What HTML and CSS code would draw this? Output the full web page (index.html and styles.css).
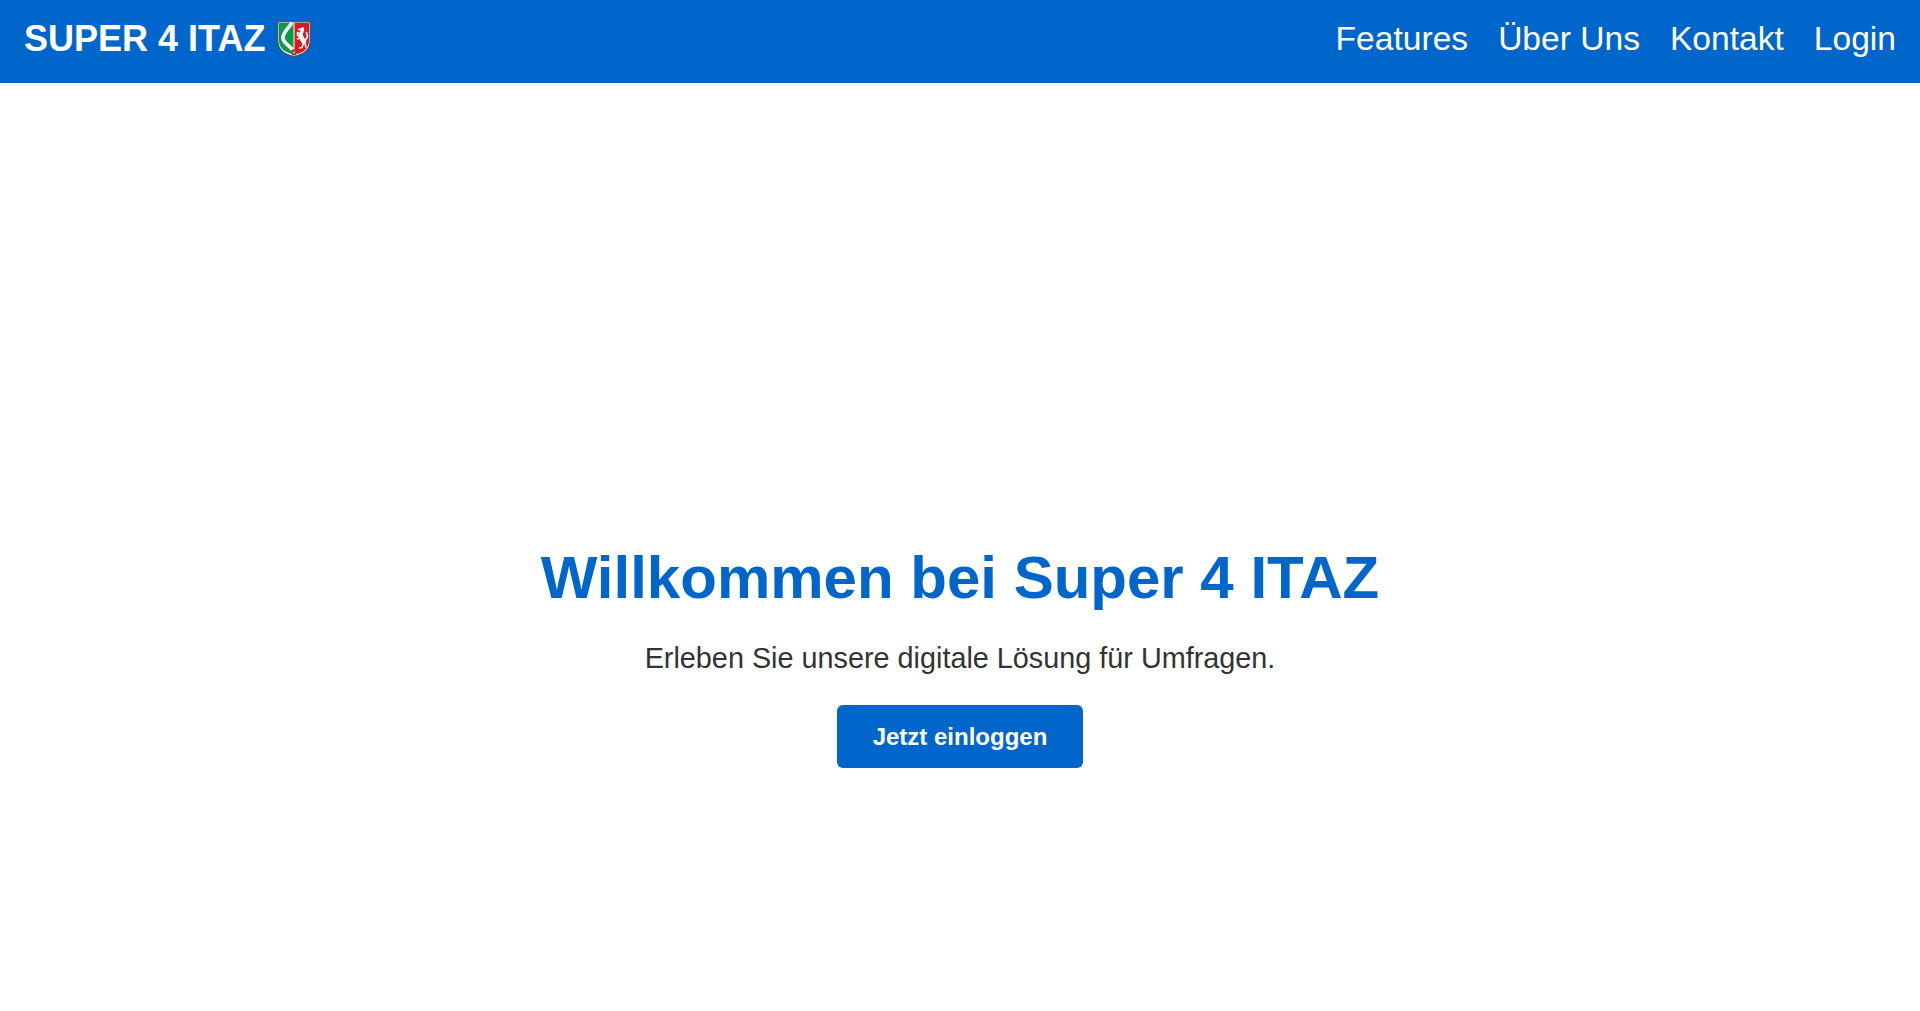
FILE: index.html
```
<!DOCTYPE html>
<html lang="de">
<head>
<meta charset="utf-8">
<title>Super 4 ITAZ</title>
<link rel="stylesheet" href="styles.css">
</head>
<body>
<header class="topbar">
  <div class="brand">
    <span class="brand-name">SUPER 4 ITAZ</span>
    <svg class="crest" viewBox="0 0 34 36" aria-hidden="true">
      <path d="M.8 .8H33.2V20C33.2 29 26 34 17 35.4C8 34 .8 29 .8 20Z" fill="#fff" stroke="#46525a" stroke-width="1.3"/>
      <path d="M2 2H16.5V33C9 32 2 28 2 20Z" fill="#0a9a48"/>
      <path d="M17.5 2H32V20C32 27 26 32 20 33L17.5 29Z" fill="#e3161f"/>
      <path class="river" d="M15 1.5C12 7 6 11 6 17C6 22 12 24 15.5 29"/>
      <g class="horse">
        <path class="horse-body" d="M23.5 15L27 21"/>
        <path class="horse-neck" d="M23.5 15.5L25.5 8"/>
        <path class="horse-limb" d="M25.5 7.5L21.5 8.5M24 13.5L20.5 11.5L20.5 14.5M24.5 16L20.5 18M27 21L25 26.5L22.5 27M27.5 21L29 26M28 20L30.5 15.5L29.5 11.5"/>
      </g>
      <circle cx="17" cy="31.2" r="3" fill="#e3161f"/>
      <circle cx="17" cy="31.2" r="2" fill="#0a9a48"/>
      <circle cx="17" cy="31.2" r=".8" fill="#fff"/>
    </svg>
  </div>
  <nav class="nav">
    <a href="#">Features</a>
    <a href="#">Über Uns</a>
    <a href="#">Kontakt</a>
    <a href="#">Login</a>
  </nav>
</header>
<main class="hero">
  <h1>Willkommen bei Super 4 ITAZ</h1>
  <p>Erleben Sie unsere digitale Lösung für Umfragen.</p>
  <a class="cta" href="#">Jetzt einloggen</a>
</main>
</body>
</html>
```
FILE: styles.css
```
* { box-sizing: border-box; }
html, body { height: 100%; }
body {
  margin: 0;
  display: flex;
  flex-direction: column;
  font-family: "Liberation Sans", Arial, sans-serif;
  background: #fff;
  color: #333;
}
.topbar {
  height: 83px;
  flex: none;
  padding: 0 24px 6px 24px;
  display: flex;
  align-items: center;
  justify-content: space-between;
  background: #0066cc;
  color: #fff;
}
.brand { display: flex; align-items: center; gap: 12px; }
.brand-name { font-size: 36px; font-weight: 700; }
.crest { width: 34px; height: 36px; display: block; }
.river { fill: none; stroke: #fff; stroke-width: 3.6; }
.horse path { fill: none; stroke: #fff; stroke-linecap: round; }
.horse .horse-body { stroke-width: 4.6; }
.horse .horse-neck { stroke-width: 3.4; }
.horse .horse-limb { stroke-width: 1.6; stroke-linejoin: round; }
.nav { display: flex; gap: 30px; }
.nav a { color: #fff; text-decoration: none; font-size: 33.6px; }
.hero {
  flex: 1;
  padding-top: 460px;
  display: flex;
  flex-direction: column;
  align-items: center;
  text-align: center;
}
.hero h1 { margin: 0; font-size: 60px; line-height: 69px; font-weight: 700; color: #0066cc; }
.hero p { margin: 30px 0 0; font-size: 28.8px; line-height: 33px; }
.cta {
  margin-top: 30px;
  width: 246px;
  height: 63px;
  display: flex;
  align-items: center;
  justify-content: center;
  border-radius: 6px;
  background: #0066cc;
  color: #fff;
  font-size: 24px;
  font-weight: 700;
  text-decoration: none;
}
```
